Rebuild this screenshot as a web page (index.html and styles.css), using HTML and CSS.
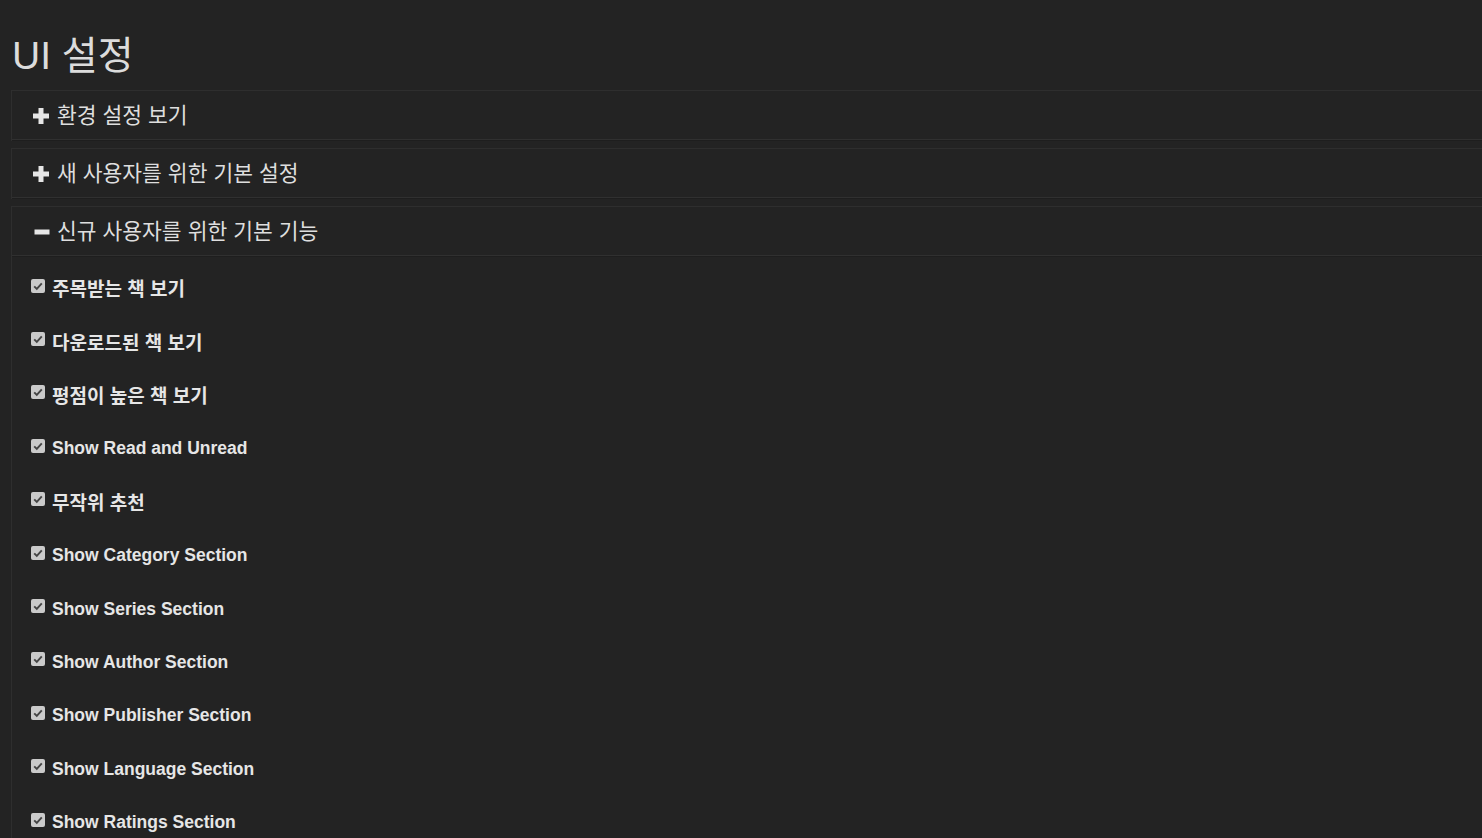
FILE: index.html
```html
<!DOCTYPE html>
<html lang="ko">
<head>
<meta charset="utf-8">
<title>UI 설정</title>
<link rel="stylesheet" href="styles.css">
</head>
<body>
<div class="page">
  <h2 class="title">UI 설정</h2>

  <div class="panel">
    <div class="panel-heading">
      <svg class="icon" width="18" height="18" viewBox="0 0 18 18"><path d="M6.5 1h5v5.5H17v5h-5.5V17h-5v-5.5H1v-5h5.5z" fill="#e6e6e6"/></svg>
      <span class="heading-text">환경 설정 보기</span>
    </div>
  </div>

  <div class="panel">
    <div class="panel-heading">
      <svg class="icon" width="18" height="18" viewBox="0 0 18 18"><path d="M6.5 1h5v5.5H17v5h-5.5V17h-5v-5.5H1v-5h5.5z" fill="#e6e6e6"/></svg>
      <span class="heading-text">새 사용자를 위한 기본 설정</span>
    </div>
  </div>

  <div class="panel">
    <div class="panel-heading">
      <svg class="icon" width="18" height="18" viewBox="0 0 18 18"><rect x="2.5" y="6.5" width="15" height="5" fill="#e6e6e6"/></svg>
      <span class="heading-text">신규 사용자를 위한 기본 기능</span>
    </div>
    <div class="panel-body">
      <label class="row"><span class="check"></span><span class="label ko">주목받는 책 보기</span></label>
      <label class="row"><span class="check"></span><span class="label ko">다운로드된 책 보기</span></label>
      <label class="row"><span class="check"></span><span class="label ko">평점이 높은 책 보기</span></label>
      <label class="row"><span class="check"></span><span class="label">Show Read and Unread</span></label>
      <label class="row"><span class="check"></span><span class="label ko">무작위 추천</span></label>
      <label class="row"><span class="check"></span><span class="label">Show Category Section</span></label>
      <label class="row"><span class="check"></span><span class="label">Show Series Section</span></label>
      <label class="row"><span class="check"></span><span class="label">Show Author Section</span></label>
      <label class="row"><span class="check"></span><span class="label">Show Publisher Section</span></label>
      <label class="row"><span class="check"></span><span class="label">Show Language Section</span></label>
      <label class="row"><span class="check"></span><span class="label">Show Ratings Section</span></label>
    </div>
  </div>
</div>
</body>
</html>
```

FILE: styles.css
```css
html, body {
  margin: 0;
  padding: 0;
  background: #232323;
  overflow: hidden;
  height: 100%;
}
body {
  font-family: "Liberation Sans", "Noto Sans CJK KR", sans-serif;
  color: #e0e0e0;
}
.page {
  padding: 0 0 0 11px;
}
.title {
  margin: 0;
  padding: 33px 0 0 1px;
  height: 60px;
  box-sizing: border-box;
  font-size: 39px;
  font-weight: 400;
  line-height: 46px;
  color: #dcdcdc;
  font-family: "Liberation Sans", "Noto Sans CJK KR", sans-serif;
}
.panel {
  margin-top: 30px;
  margin-right: -6px;
  border: 1px solid #2e2e2e;
  background: #232323;
}
.panel + .panel {
  margin-top: 7px;
}
.panel-heading {
  height: 48px;
  display: flex;
  align-items: center;
  padding-left: 20px;
  border-bottom: 1px solid #303030;
  box-shadow: 0 1px 0 #1e1e1e;
}
.icon {
  display: block;
  flex: none;
  margin-top: 1px;
}
.heading-text {
  margin-left: 7px;
  margin-top: -4px;
  font-size: 21.5px;
  color: #dedede;
}
.panel-body {
  padding: 5px 0 0 19px;
}
.row {
  display: flex;
  align-items: center;
  height: 53.4px;
}
.check {
  width: 14px;
  height: 14px;
  flex: none;
  border-radius: 2px;
  background: #cacaca url("data:image/svg+xml;utf8,<svg xmlns='http://www.w3.org/2000/svg' width='14' height='14' viewBox='0 0 14 14'><path d='M3.2 7.3l2.6 2.6L10.8 4.4' fill='none' stroke='%23444' stroke-width='1.9'/></svg>") no-repeat center;
  margin-top: -4px;
}
.label {
  margin-left: 7px;
  margin-top: 2px;
  font-size: 17.5px;
  font-weight: 700;
  color: #e6e6e6;
}
.label.ko {
  font-size: 19px;
  margin-top: 0;
}
```
